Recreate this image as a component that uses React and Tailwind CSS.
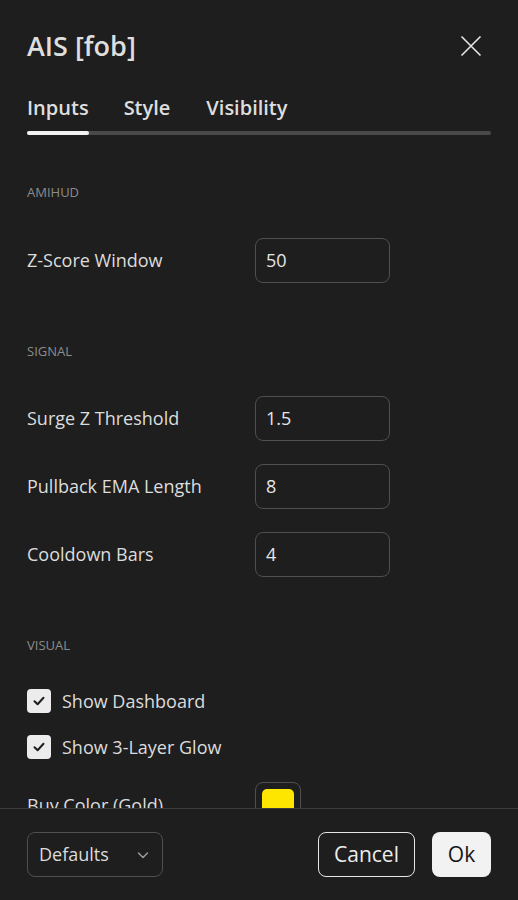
import React from "react";

const font = { fontFamily: '"Open Sans", "Noto Sans", sans-serif' };

function Section({ children, className = "" }) {
  return (
    <div className={"h-4 text-[13px] leading-4 uppercase text-[#8c8c8c] " + className}>
      {children}
    </div>
  );
}

function InputRow({ label, value, className = "" }) {
  return (
    <div className={"flex items-center h-[45px] " + className}>
      <div className="w-[228px] text-[18px] text-[#dcdcdc]">{label}</div>
      <div className="w-[135px] h-[45px] rounded-lg border border-[#4f4f4f] flex items-center px-[10px] text-[18px] text-[#e6e6e6]">
        {value}
      </div>
    </div>
  );
}

function CheckRow({ label, className = "" }) {
  return (
    <div className={"flex items-center h-6 " + className}>
      <div className="w-6 h-6 rounded-[4px] bg-[#ececec] flex items-center justify-center">
        <svg width="14" height="14" viewBox="0 0 14 14" fill="none">
          <path d="M2.5 7.2 L5.6 10.2 L11.5 3.8" stroke="#1e1e1e" strokeWidth="2" strokeLinecap="round" strokeLinejoin="round" />
        </svg>
      </div>
      <div className="ml-[11px] text-[18px] text-[#dcdcdc]">{label}</div>
    </div>
  );
}

export default function App() {
  return (
    <div className="w-[518px] h-[900px] bg-[#1e1e1e] flex flex-col overflow-hidden" style={font}>
      <div className="px-[27px]">
        <div className="mt-[26px] flex items-center justify-between h-10">
          <div className="text-[27px] font-semibold text-[#dedede] leading-8">AIS [fob]</div>
          <button className="w-10 h-10 flex items-center justify-center">
            <svg width="22" height="22" viewBox="0 0 22 22" fill="none">
              <path d="M1.5 1.5 L20.5 20.5 M20.5 1.5 L1.5 20.5" stroke="#e6e6e6" strokeWidth="1.6" />
            </svg>
          </button>
        </div>
        <div className="mt-[30px] flex items-center h-6 text-[20px] font-semibold text-[#dedede] leading-6">
          <div>Inputs</div>
          <div className="ml-[35px]">Style</div>
          <div className="ml-[36px]">Visibility</div>
        </div>
        <div className="mt-[11px] h-1 rounded-full bg-[#4a4a4a] flex">
          <div className="w-[62px] h-1 rounded-full bg-[#f2f2f2]" />
        </div>
      </div>
      <div className="flex-1 overflow-hidden px-[27px]">
        <Section className="mt-[49px]">Amihud</Section>
        <InputRow className="mt-[38px]" label="Z-Score Window" value="50" />
        <Section className="mt-[60px]">Signal</Section>
        <InputRow className="mt-[37px]" label="Surge Z Threshold" value="1.5" />
        <InputRow className="mt-[23px]" label="Pullback EMA Length" value="8" />
        <InputRow className="mt-[23px]" label="Cooldown Bars" value="4" />
        <Section className="mt-[60px]">Visual</Section>
        <CheckRow className="mt-[36px]" label="Show Dashboard" />
        <CheckRow className="mt-[22px]" label="Show 3-Layer Glow" />
        <div className="mt-[23px] flex items-center h-[46px]">
          <div className="w-[228px] text-[18px] text-[#dcdcdc]">Buy Color (Gold)</div>
          <div className="w-[46px] h-[46px] rounded-lg border border-[#4f4f4f] flex items-center justify-center">
            <div className="w-8 h-8 rounded-[5px] bg-[#ffe600]" />
          </div>
        </div>
      </div>
      <div className="h-[92px] border-t border-[#3c3c3c] px-[27px] flex items-center justify-between">
        <div className="w-[136px] h-[45px] rounded-lg border border-[#4f4f4f] flex items-center justify-between pl-[11px] pr-[12px] text-[18px] text-[#dcdcdc]">
          <span>Defaults</span>
          <svg width="14" height="14" viewBox="0 0 14 14" fill="none">
            <path d="M2.5 5 L7 9.5 L11.5 5" stroke="#9a9a9a" strokeWidth="1.5" strokeLinecap="round" strokeLinejoin="round" />
          </svg>
        </div>
        <div className="flex items-center gap-[17px]">
          <button className="w-[97px] h-[45px] rounded-lg border border-[#e6e6e6] text-[21px] text-[#ededed]">Cancel</button>
          <button className="w-[59px] h-[45px] rounded-lg bg-[#f2f2f2] text-[21px] text-[#161616]">Ok</button>
        </div>
      </div>
    </div>
  );
}
